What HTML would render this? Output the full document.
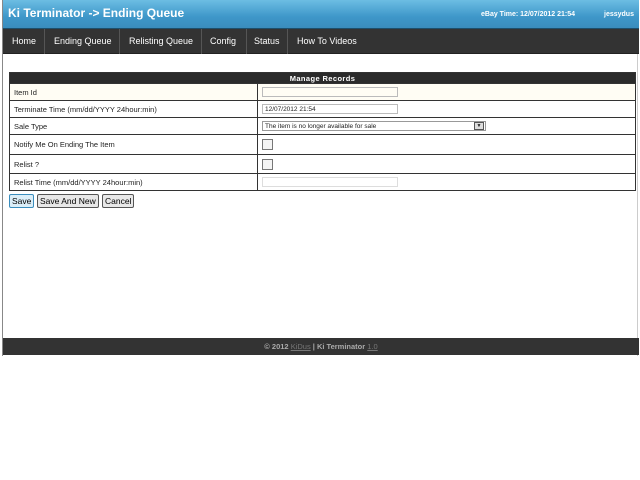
<!DOCTYPE html>
<html><head><style>
*{margin:0;padding:0;box-sizing:border-box}
body{width:640px;height:480px;background:#fff;font-family:"Liberation Sans",Arial,sans-serif;position:relative;overflow:hidden}
#wrap{position:absolute;left:2px;top:0;width:636px;height:356px;border-left:1px solid #888;border-right:1px solid #ccc}
#hdr{position:absolute;left:0;top:0;width:636px;height:29px;background:linear-gradient(#6cbde3,#3e97c9 60%,#3a8dbd);border-bottom:1px solid #1d4f6c}
#hdr .t{position:absolute;left:5px;top:6px;color:#fff;font-size:12px;font-weight:bold}
#hdr .r{position:absolute;top:11px;color:#fff;font-size:7px;font-weight:bold}
#nav{position:absolute;left:0;top:29px;width:636px;height:25px;background:#333;border-bottom:1px solid #222}
#nav span{position:absolute;top:0;height:25px;line-height:25px;color:#fff;font-size:9px;border-right:1px solid #555;white-space:nowrap}
table{position:absolute;left:6px;top:72px;width:627px;border-collapse:collapse;font-size:7.5px;color:#222}
th{background:#2b2b2b;color:#fff;height:11px;font-size:7.5px;letter-spacing:.4px;border:1px solid #333}
td{border:1px solid #333;padding:0 4px;height:17px}
td.l{width:248px}
.in{width:136px;height:10px;border:1px solid #bbb;font-size:6.5px;line-height:9px;padding-left:2px}
.cb{width:11px;height:11px;border:1px solid #777;background:#f4f4f4}
.sel{width:224px;height:10px;border:1px solid #999;font-size:6.5px;line-height:9px;padding-left:2px;position:relative}
.sel i{position:absolute;right:1px;top:0;width:10px;height:8px;border:1px solid #555;background:#ddd;font-style:normal;font-size:5px;text-align:center;line-height:7px}
.btn{position:absolute;top:194px;height:14px;border:1px solid #555;background:#e8e8e8;font-size:8.5px;line-height:12px;padding:0 2px;border-radius:2px;white-space:nowrap}
#ftr{position:absolute;left:0;top:338px;width:636px;height:17px;background:#333;color:#aaa;font-size:7.5px;font-weight:bold;text-align:center;line-height:17px}
#ftr u{color:#777;font-weight:normal}
</style></head><body>
<div id="wrap">
<div id="hdr"><div class="t">Ki Terminator -&gt; Ending Queue</div><div class="r" style="left:478px">eBay Time: 12/07/2012 21:54</div><div class="r" style="left:601px">jessydus</div></div>
<div id="nav">
<span style="left:0;width:42px;padding-left:9px">Home</span>
<span style="left:42px;width:75px;padding-left:9px">Ending Queue</span>
<span style="left:117px;width:82px;padding-left:9px">Relisting Queue</span>
<span style="left:199px;width:45px;padding-left:8px">Config</span>
<span style="left:244px;width:41px;padding-left:7px">Status</span>
<span style="left:285px;width:80px;padding-left:9px;border:none">How To Videos</span>
</div>
<table>
<tr><th colspan="2">Manage Records</th></tr>
<tr style="background:#fffdf4"><td class="l">Item Id</td><td><div class="in"></div></td></tr>
<tr><td class="l">Terminate Time (mm/dd/YYYY 24hour:min)</td><td><div class="in">12/07/2012 21:54</div></td></tr>
<tr><td class="l">Sale Type</td><td><div class="sel">The item is no longer available for sale<i>▼</i></div></td></tr>
<tr><td class="l" style="height:20px">Notify Me On Ending The Item</td><td><div class="cb"></div></td></tr>
<tr><td class="l" style="height:19px">Relist ?</td><td><div class="cb"></div></td></tr>
<tr><td class="l">Relist Time (mm/dd/YYYY 24hour:min)</td><td><div class="in" style="border-color:#ddd"></div></td></tr>
</table>
<div class="btn" style="left:6px;background:#dbeef8;border-color:#3a8dbd">Save</div>
<div class="btn" style="left:34px">Save And New</div>
<div class="btn" style="left:99px">Cancel</div>
<div id="ftr">© 2012 <u>KiDus</u> | Ki Terminator <u>1.0</u></div>
</div>
</body></html>
